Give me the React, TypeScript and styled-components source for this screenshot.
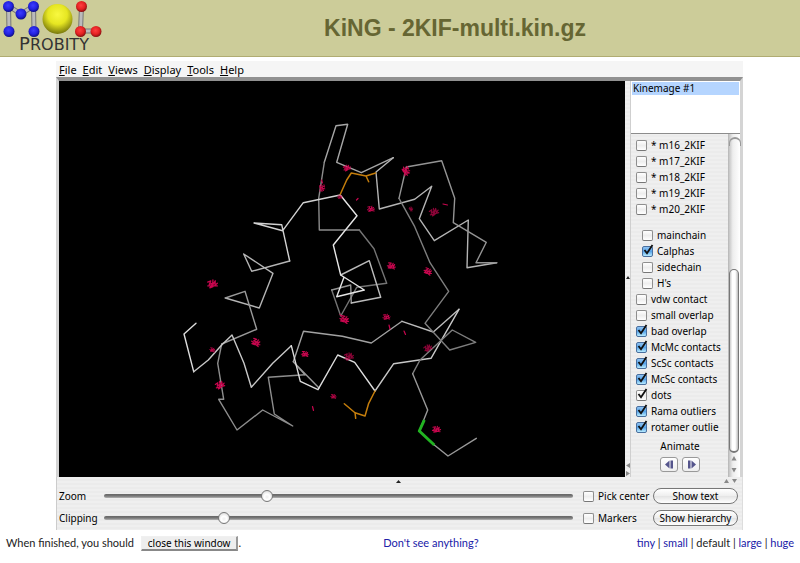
import React from "react";
import styled, { createGlobalStyle, css } from "styled-components";

const uiFont = `"Noto Sans", "Open Sans", sans-serif`;
const pinstripe = `repeating-linear-gradient(#efefef 0 2px, #ebebeb 2px 4px)`;

const GlobalStyle = createGlobalStyle`
  * { box-sizing: border-box; }
  body { margin: 0; background: #fff; color: #000; font-family: Lato, sans-serif; font-size: 12px; }
`;

const Header = styled.header`
  display: flex;
  align-items: center;
  height: 57px;
  background: #cccc99;
  border-bottom: 1px solid #b0ac72;
`;

const Logo = styled.svg`
  flex: none;
  width: 104px;
  height: 56px;
`;

const Title = styled.h1`
  flex: 1;
  margin: 0;
  padding-left: 6px;
  text-align: center;
  color: #666633;
  font: bold 23px/28px "Liberation Sans", Arial, sans-serif;
`;

const Applet = styled.main`
  margin: 4px 57px 0 56px;
  background: ${pinstripe};
  font: 10px/16px ${uiFont};
`;

const MenuBar = styled.nav`
  display: flex;
  gap: 6px;
  height: 16px;
  padding-left: 3px;
  background: #f5f5f5;
`;

const MenuButton = styled.button`
  padding: 0;
  border: 0;
  background: none;
  color: #000;
  font: 11px/18px ${uiFont};
  &::first-letter { text-decoration: underline; }
`;

const Workspace = styled.section`
  display: flex;
  height: 400px;
  border-top: 4px solid #919191;
  border-left: 3px solid #d4d4d4;
  border-right: 3px solid #d4d4d4;
`;

const Canvas = styled.svg`
  flex: 1;
  min-width: 0;
  height: 396px;
  background: #000;
`;

const Divider = styled.div`
  flex: none;
  display: flex;
  flex-direction: column;
  align-items: center;
  justify-content: space-between;
  width: 6px;
  padding-top: 195px;
  border-right: 1px solid #cfcfcf;
`;

const Arrows = styled.svg<{ $w: number; $h: number }>`
  display: block;
  flex: none;
  width: ${(p) => p.$w}px;
  height: ${(p) => p.$h}px;
  fill: #888;
`;

const Side = styled.aside`
  flex: none;
  display: flex;
  flex-direction: column;
  width: 109px;
`;

const KinemageList = styled.div`
  height: 53px;
  padding: 1px 1px 0;
  background: #fff;
  border-bottom: 1px solid #8c8c8c;
`;

const KinemageItem = styled.button`
  display: block;
  width: 100%;
  height: 13px;
  padding: 0 1px;
  border: 0;
  background: #b5d5ff;
  color: #000;
  text-align: left;
  font: 10px/13px ${uiFont};
`;

const TreeArea = styled.div`
  flex: 1;
  display: flex;
  min-height: 0;
`;

const Tree = styled.div`
  flex: 1;
  min-width: 0;
  padding: 3px 0 0 5px;
`;

const Group = styled.div<{ $nested?: boolean }>`
  ${(p) => p.$nested && css`
    padding: 10px 0 0 6px;
  `}
`;

const CheckLabel = styled.label`
  display: flex;
  align-items: center;
  gap: 4px;
  height: 16px;
  white-space: nowrap;
`;

const BoxWrap = styled.span`
  position: relative;
  flex: none;
  width: 11px;
  height: 11px;
`;

const Box = styled.input<{ $plain?: boolean }>`
  appearance: none;
  display: block;
  width: 11px;
  height: 11px;
  margin: 0;
  border: 1px solid #8e8e8e;
  border-bottom-color: #777;
  border-radius: 2px;
  background: linear-gradient(#fff, #eee 50%, #fff);
  ${(p) => !p.$plain && css`
    &:checked {
      border-color: #4a6f9e;
      background: linear-gradient(#8fc3f2, #58a4ea 50%, #b8ecff);
    }
  `}
  & + svg { visibility: hidden; }
  &:checked + svg { visibility: visible; }
`;

const Tick = styled.svg`
  position: absolute;
  left: 1px;
  top: -2px;
  width: 11px;
  height: 12px;
  pointer-events: none;
`;

const Animate = styled.div`
  padding: 3px 4px 0 0;
  text-align: center;
`;

const StepRow = styled.div`
  display: flex;
  justify-content: center;
  gap: 4px;
  padding-top: 3px;
`;

const StepButton = styled.button`
  display: grid;
  place-items: center;
  width: 18px;
  height: 15px;
  padding: 0;
  border: 1px solid #999;
  border-radius: 3px;
  background: linear-gradient(#fff, #eee);
`;

const ScrollBar = styled.div`
  flex: none;
  display: flex;
  flex-direction: column;
  width: 12px;
  background: linear-gradient(90deg, #c4c4c4, #eee 35%, #fff);
  border-left: 1px solid #bbb;
`;

const ScrollTop = styled.div`
  height: 135px;
  padding-top: 3px;
  &::before {
    content: "";
    display: block;
    width: 10px;
    height: 7px;
    border: 1px solid #999;
    border-width: 2px 1px 0;
    border-radius: 6px 6px 0 0;
  }
`;

const ScrollThumb = styled.div`
  flex: 1;
  width: 10px;
  border: 1px solid #777;
  border-bottom-width: 2px;
  border-radius: 6px;
  background: linear-gradient(90deg, #ccc, #fff 30%, #fff 65%, #bbb);
`;

const Controls = styled.section`
  padding: 0 4px 1px 2px;
  border-left: 1px solid #ccc;
  border-right: 1px solid #ddd;
`;

const SplitBar = styled.div`
  display: flex;
  justify-content: space-between;
  align-items: center;
  height: 8px;
  padding-left: 337px;
`;

const ControlGrid = styled.div`
  display: grid;
  grid-template-columns: 40px 1fr 66px 85px;
  grid-auto-rows: 22px;
  column-gap: 4px;
  align-items: center;
`;

const Slider = styled.input`
  appearance: none;
  width: 100%;
  height: 13px;
  margin: 0;
  padding-left: 1px;
  background: none;
  &::-webkit-slider-runnable-track {
    height: 4px;
    border-radius: 2px;
    background: linear-gradient(#666, #777 50%, #b5b5b5);
  }
  &::-webkit-slider-thumb {
    appearance: none;
    width: 12px;
    height: 12px;
    margin-top: -4px;
    border: 1px solid #777;
    border-radius: 50%;
    background: radial-gradient(circle at 50% 60%, #eee, #fff 35%, #ccc);
  }
`;

const SliderCell = styled.div`
  display: flex;
  padding-right: 6px;
`;

const Pill = styled.button`
  height: 16px;
  padding: 0;
  border: 1px solid #777;
  border-radius: 8px;
  background: linear-gradient(#fff, #eee 50%, #e4e4e4 52%, #fff);
  color: #000;
  white-space: nowrap;
  font: 10px/13px ${uiFont};
`;

const Footer = styled.footer`
  display: flex;
  justify-content: space-between;
  align-items: center;
  padding: 5px 6px 0;
  color: #222;
  font: 11px/16px Lato, sans-serif;
`;

const CloseButton = styled.button`
  height: 15px;
  margin-left: 4px;
  padding: 0 6px;
  border: 1px solid #f0f0f0;
  border-right: 2px solid #999;
  border-bottom: 2px solid #888;
  background: #eee;
  color: #000;
  font: 10px/12px ${uiFont};
`;

const Link = styled.a`
  color: #2020a8;
  text-decoration: none;
`;

const HelpCell = styled.div`
  padding-right: 16px;
`;

const TickMark = () => (
  <Tick viewBox="0 0 11 12" aria-hidden="true">
    <path d="M1.5 6 L4 9.3 L9.5 1" fill="none" stroke="#111" strokeWidth="1.8" />
  </Tick>
);

type CheckProps = { label: string; on?: boolean; plain?: boolean };

const Check = ({ label, on, plain }: CheckProps) => (
  <CheckLabel>
    <BoxWrap>
      <Box type="checkbox" defaultChecked={on} $plain={plain} />
      <TickMark />
    </BoxWrap>
    {label}
  </CheckLabel>
);

const models = ["* m16_2KIF", "* m17_2KIF", "* m18_2KIF", "* m19_2KIF", "* m20_2KIF"];
const parts: CheckProps[] = [
  { label: "mainchain" },
  { label: "Calphas", on: true },
  { label: "sidechain" },
  { label: "H's" },
];
const masters: CheckProps[] = [
  { label: "vdw contact" },
  { label: "small overlap" },
  { label: "bad overlap", on: true },
  { label: "McMc contacts", on: true },
  { label: "ScSc contacts", on: true },
  { label: "McSc contacts", on: true },
  { label: "dots", on: true, plain: true },
  { label: "Rama outliers", on: true },
  { label: "rotamer outlie", on: true },
];

const backbone: [string, string][] = [
  ["#a6a6a6", "393.3,157.7 361.3,172.7 336.7,162.3 347.7,124.3 336,125.7 324.3,162.3"],
  ["#8c8c8c", "324.3,162.3 318.7,198.3 319.3,230 359.3,230"],
  ["#747474", "359.3,230 374,248.7 386.7,283.3 356.7,287.3 340.7,316 331.7,290"],
  ["#959595", "331.7,290 350.7,285 351.3,303"],
  ["#bcbcbc", "351.3,303 380.7,297.3 369.3,260.7 340.7,275"],
  ["#e6e6e6", "340.7,275 364.3,290 336.7,296.7 344,277.3 340.7,275 333.3,245 357,215.7 340.3,195"],
  ["#d2d2d2", "340.3,195 303.3,202.7 282.7,230.7 254,223 281.7,224.7 289.7,261"],
  ["#b5b5b5", "289.7,261 251.7,271.3 243.7,254 273,273.3 259.3,308 225.3,298"],
  ["#9a9a9a", "225.3,298 245,291.3 256.7,329.3 221.7,344"],
  ["#8e8e8e", "221.7,344 217.7,363.3 223.7,399.3 218.7,399.3 237,430 262.7,410 292.7,426 274.3,414 268.3,377.3 305,374.7"],
  ["#9a9a9a", "305,374.7 293.3,361.7 319,388"],
  ["#a2a2a2", "293.3,361.7 303.5,331.3 342.3,336.3 371.3,343 402,321.3"],
  ["#bbbbbb", "402,321.3 433.3,332 459,309.3"],
  ["#dddddd", "196,323.3 184,334 193.7,371.7"],
  ["#c8c8c8", "193.7,371.7 208.3,360 221.7,345 232,335 244,363.3 251.3,387.3 272.7,363.3 291.3,345.7"],
  ["#dddddd", "291.3,345.7 300.3,381.3 318,389.7 337.7,355 354.7,362.3 375,391"],
  ["#c8c8c8", "375,391 393.7,363.7 431,358.3 459,309.3"],
  ["#b4b4b4", "393.3,157.7 376,172 379.3,209 414.7,199.3 431.7,186.3 419.3,218.7 434.3,240.7 468.3,220 467,267.7 496.7,262.7"],
  ["#949494", "496.7,262.7 476,262.7 486.3,242.3 453.3,222.7 454.7,198.3 441.7,160.7 406.3,167 399,198.3"],
  ["#7e7e7e", "399,198.3 414.7,226.7 430,262.7 448.7,291.3 425,323.3 449.7,350 475.7,342.3 452.3,330 420,360 412.7,373.7"],
  ["#999999", "412.7,373.7 427.7,410 419.3,431 434.3,445 448,456 476.3,438.3"],
];

/* x, y, scale, rotation, dim */
const clashes: [number, number, number, number, boolean][] = [
  [347, 168, 0.8, -20, false], [322, 188, 0.8, 90, false], [340, 197, 0.5, 0, false],
  [371, 209, 0.8, 0, false], [406, 171, 1.0, 70, false], [434, 212, 1.0, -25, true],
  [391.5, 266, 0.9, 15, false], [428, 271.5, 0.9, 30, false], [212.5, 284, 1.1, -10, false],
  [256, 342.5, 1.0, 30, false], [212.5, 350, 0.6, 20, false], [220, 385, 1.0, -25, false],
  [305, 354, 0.8, 10, false], [333.5, 396.5, 0.6, 10, false], [344.5, 319.5, 1.0, 25, false],
  [386.5, 317, 0.8, 0, false], [428, 348, 0.9, -30, true], [349, 356.5, 1.0, -15, true],
  [436.5, 429.5, 0.9, 0, false], [411, 209, 0.5, 60, true],
];

const Molecule = () => (
  <Canvas viewBox="59 81 566 396" role="img" aria-label="Alpha carbon trace of 2KIF">
    <g fill="none" strokeWidth="1.4" strokeLinejoin="round" strokeLinecap="round">
      {backbone.map(([color, points], i) => (
        <polyline key={i} points={points} stroke={color} />
      ))}
      <g stroke="#c47d0c" strokeWidth="1.5">
        <path d="M340.3 194.3 L346.7 180 L351.3 173 L366 176 L375.7 173 M366 176 L368.7 181.7" />
        <path d="M375 391 L368.7 403.3 L365 416 L355 412.7 L344.3 403.7 M355 412.7 L355.7 418.3" />
      </g>
      <path d="M424.3 420 L419.3 431 L434.3 445" stroke="#22b422" strokeWidth="3" strokeLinecap="butt" />
      <g stroke="#c8064e" strokeWidth="1.2">
        {clashes.map(([x, y, s, r, dim], i) => (
          <path
            key={i}
            opacity={dim ? 0.7 : 1}
            transform={`translate(${x} ${y}) rotate(${r}) scale(${s})`}
            d="M-4 -2.5 L-1 -3 L-3 0 L1 -1 L-3 3 L0 2.5 M1 -3.5 L0 1 L3 -2.5 L2 1.5 L4.5 0 M-4.5 1 L4 2.5"
          />
        ))}
        <path d="M321.5 180 L322.5 183 M356.5 200 L358 198.5 M443 204 L447.5 205 M312.5 406.5 L313.5 410.5 M389 325 L390 329 M404 331 L405.5 334.5 M340 314.5 L342 317" />
      </g>
    </g>
  </Canvas>
);

const MolProbityLogo = () => (
  <Logo viewBox="0 0 104 56" role="img" aria-label="MolProbity">
    <defs>
      <radialGradient id="blue" cx="45%" cy="40%" r="60%">
        <stop offset="0" stopColor="#3c3cff" /><stop offset="0.6" stopColor="#2222e0" /><stop offset="1" stopColor="#101080" />
      </radialGradient>
      <radialGradient id="red" cx="45%" cy="40%" r="60%">
        <stop offset="0" stopColor="#ff4040" /><stop offset="0.6" stopColor="#e42222" /><stop offset="1" stopColor="#851010" />
      </radialGradient>
      <radialGradient id="yellow" cx="50%" cy="35%" r="65%">
        <stop offset="0" stopColor="#f8f840" /><stop offset="0.5" stopColor="#e6e622" /><stop offset="1" stopColor="#77770c" />
      </radialGradient>
    </defs>
    <g fill="none" stroke="#777" strokeWidth="5">
      <path d="M8.5 6 L9 31 M8.5 6 L21 14 L33.5 6 L34 31 M81.5 6 L80.5 31 H96" />
      <path d="M8.5 6 L9 31 M8.5 6 L21 14 L33.5 6 L34 31 M81.5 6 L80.5 31 H96" stroke="#bbb" strokeWidth="3" />
    </g>
    <g fill="url(#blue)">
      <circle cx="8.5" cy="6.5" r="5.5" /><circle cx="33.5" cy="6.5" r="5.5" /><circle cx="21" cy="14" r="5.5" />
      <circle cx="9" cy="31.5" r="5.5" /><circle cx="34" cy="31.5" r="5.5" />
    </g>
    <circle cx="57.5" cy="19" r="15" fill="url(#yellow)" />
    <g fill="url(#red)">
      <circle cx="81.5" cy="6.5" r="5.5" /><circle cx="80.5" cy="31.5" r="5.5" /><circle cx="96" cy="31.5" r="5.5" />
    </g>
    <text x="54" y="50" textAnchor="middle" fill="#333" fontFamily="DejaVu Sans" fontSize="16">
      <tspan fontSize="18">P</tspan>ROBITY
    </text>
  </Logo>
);

const sizes = ["tiny", "small", "default", "large", "huge"];

export default function App() {
  return (
    <>
      <GlobalStyle />
      <Header>
        <MolProbityLogo />
        <Title>KiNG - 2KIF-multi.kin.gz</Title>
      </Header>
      <Applet>
        <MenuBar>
          {["File", "Edit", "Views", "Display", "Tools", "Help"].map((m) => (
            <MenuButton key={m}>{m}</MenuButton>
          ))}
        </MenuBar>
        <Workspace>
          <Molecule />
          <Divider>
            <Arrows $w={4} $h={3} viewBox="0 0 4 3"><path d="M0 3 L2 0 L4 3Z" fill="#222" /></Arrows>
            <Arrows $w={4} $h={14} viewBox="0 0 4 14"><path d="M4 0 V5 L0 2.5Z M0 8 V13 L4 10.5Z" /></Arrows>
          </Divider>
          <Side>
            <KinemageList>
              <KinemageItem>Kinemage #1</KinemageItem>
            </KinemageList>
            <TreeArea>
              <Tree>
                <Group>{models.map((m) => <Check key={m} label={m} />)}</Group>
                <Group $nested>{parts.map((p) => <Check key={p.label} {...p} />)}</Group>
                <Group>{masters.map((p) => <Check key={p.label} {...p} />)}</Group>
                <Animate>
                  Animate
                  <StepRow>
                    <StepButton aria-label="Previous frame">
                      <Arrows $w={9} $h={9} viewBox="0 0 9 9"><path d="M4.5 0.5 V8.5 L0 4.5Z M5.5 0.5 H8 V8.5 H5.5Z" fill="#55558c" /></Arrows>
                    </StepButton>
                    <StepButton aria-label="Next frame">
                      <Arrows $w={9} $h={9} viewBox="0 0 9 9"><path d="M4.5 0.5 V8.5 L9 4.5Z M1 0.5 H3.5 V8.5 H1Z" fill="#55558c" /></Arrows>
                    </StepButton>
                  </StepRow>
                </Animate>
              </Tree>
              <ScrollBar>
                <ScrollTop />
                <ScrollThumb />
                <Arrows $w={10} $h={24} viewBox="0 0 10 24"><path d="M2.5 7.5 L5 3 L7.5 7.5Z M2.5 15 H7.5 L5 19.5Z" /></Arrows>
              </ScrollBar>
            </TreeArea>
          </Side>
        </Workspace>
        <Controls>
          <SplitBar>
            <Arrows $w={5} $h={3} viewBox="0 0 5 3"><path d="M0 3 L2.5 0 L5 3Z" fill="#222" /></Arrows>
            <Arrows $w={14} $h={4} viewBox="0 0 14 4"><path d="M0 4 H5 L2.5 0Z M8 0 H13 L10.5 4Z" /></Arrows>
          </SplitBar>
          <ControlGrid>
            <label htmlFor="zoom">Zoom</label>
            <SliderCell><Slider id="zoom" type="range" min="0" max="1000" defaultValue="344" /></SliderCell>
            <Check label="Pick center" />
            <Pill>Show text</Pill>
            <label htmlFor="clipping">Clipping</label>
            <SliderCell><Slider id="clipping" type="range" min="0" max="1000" defaultValue="250" /></SliderCell>
            <Check label="Markers" />
            <Pill>Show hierarchy</Pill>
          </ControlGrid>
        </Controls>
      </Applet>
      <Footer>
        <div>When finished, you should <CloseButton>close this window</CloseButton>.</div>
        <HelpCell><Link href="#help">Don't see anything?</Link></HelpCell>
        <div>
          {sizes.map((s, i) => (
            <React.Fragment key={s}>
              {i > 0 && " | "}
              {s === "default" ? s : <Link href={`#${s}`}>{s}</Link>}
            </React.Fragment>
          ))}
        </div>
      </Footer>
    </>
  );
}
